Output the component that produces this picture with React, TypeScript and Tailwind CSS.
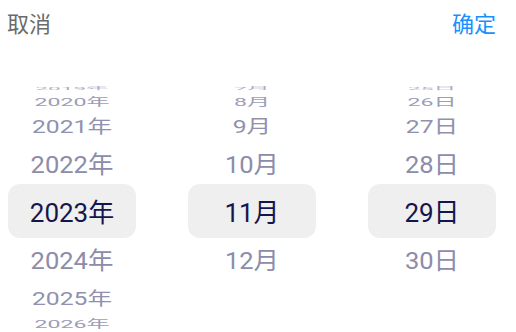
import React from 'react';

// offset from the centre row -> place on the wheel
const ROWS: Record<number, { y: number; sx: number; sy: number; o: number }> = {
  0: { y: 0, sx: 1, sy: 1, o: 1 },
  1: { y: 48, sx: 0.98, sy: 0.9, o: 1 },
  2: { y: 86, sx: 0.95, sy: 0.72, o: 0.95 },
  3: { y: 111, sx: 0.89, sy: 0.45, o: 0.85 },
  4: { y: 124, sx: 0.87, sy: 0.16, o: 0.7 },
};

const font = { fontFamily: 'Roboto, "Noto Sans CJK SC", sans-serif' };

function Wheel({ items, selected }: { items: string[]; selected: number }) {
  return (
    <div className="relative w-[128px] h-[252px] overflow-hidden">
      <div className="absolute left-0 right-0 top-[99px] h-[54px] rounded-xl bg-[#efefef]" />
      {items.map((label, i) => {
        const k = i - selected;
        const row = ROWS[Math.abs(k)];
        if (!row) return null;
        const dir = k < 0 ? -1 : 1;
        return (
          <div
            key={label}
            className={`absolute left-0 right-0 top-[101px] h-[54px] flex items-center justify-center text-[26px] ${
              k === 0 ? 'text-[#15154d]' : 'text-[#8c8cab]'
            }`}
            style={{
              ...font,
              opacity: row.o,
              transform: `translateY(${dir * row.y}px) scale(${row.sx}, ${row.sy})`,
            }}
          >
            {label}
          </div>
        );
      })}
    </div>
  );
}

export default function App() {
  const years = Array.from({ length: 11 }, (_, i) => `${2018 + i}年`);
  const months = Array.from({ length: 12 }, (_, i) => `${i + 1}月`);
  const days = Array.from({ length: 30 }, (_, i) => `${i + 1}日`);

  return (
    <div className="w-[516px] h-[332px] bg-white overflow-hidden">
      <div
        className="h-[45px] flex items-center justify-between pl-[7px] pr-[20px] text-[22px]"
        style={{ fontFamily: '"Noto Sans CJK SC", sans-serif' }}
      >
        <span className="text-[#6b6b6b]">取消</span>
        <span className="text-[#1890ff]">确定</span>
      </div>
      <div className="mt-[40px] flex justify-between pl-[8px] pr-[20px]">
        <Wheel items={years} selected={5} />
        <Wheel items={months} selected={10} />
        <Wheel items={days} selected={28} />
      </div>
    </div>
  );
}
